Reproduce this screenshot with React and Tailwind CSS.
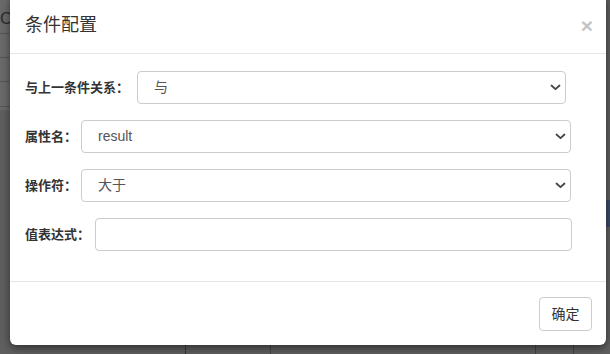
import React from "react";

const cjk = { fontFamily: '"Liberation Sans", "Noto Sans CJK SC", sans-serif' };

const Chevron = () => (
  <svg width="11" height="7" viewBox="0 0 11 7" className="shrink-0">
    <path d="M1.5 1.5 L5.5 5.2 L9.5 1.5" fill="none" stroke="#444" strokeWidth="1.8" strokeLinecap="round" strokeLinejoin="round" />
  </svg>
);

const SelectBox = ({ value, width }) => (
  <div
    className="h-[33px] flex items-center justify-between pl-[16px] pr-[4px] border border-[#ccc] rounded-[4px] bg-white text-[14px] text-[#555]"
    style={{ width }}
  >
    <span>{value}</span>
    <Chevron />
  </div>
);

const Row = ({ label, labelWidth, children }) => (
  <div className="flex items-center">
    <span className="text-[13px] font-bold text-[#333] shrink-0" style={{ width: labelWidth }}>{label}</span>
    {children}
  </div>
);

export default function App() {
  return (
    <div className="relative w-[610px] h-[354px] overflow-hidden bg-[#5f5f5f]" style={cjk}>
      {/* dimmed page behind the dialog */}
      <div className="absolute left-0 top-0 w-[12px] h-[110px] bg-[#6a6a6a]">
        <span className="absolute left-0 top-[10px] text-[17px] text-[#2a2a2a] leading-none">C</span>
        <div className="absolute left-0 top-[33px] w-full border-t border-[#555]" />
        <div className="absolute left-0 top-[57px] w-full border-t border-[#555]" />
        <div className="absolute left-0 top-[81px] w-full border-t border-[#555]" />
        <div className="absolute left-0 top-[106px] w-full border-t border-[#555]" />
      </div>
      <div className="absolute left-[185px] top-[344px] h-[10px] border-l border-dashed border-[#333]" />
      <div className="absolute left-[270px] top-[344px] h-[10px] border-l border-[#444]" />
      <div className="absolute left-[535px] top-[344px] h-[10px] border-l border-[#444]" />
      <div className="absolute left-[573px] top-[344px] h-[10px] border-l border-[#444]" />
      <div className="absolute left-[605px] top-[200px] w-[5px] h-[27px] bg-[#3b4a66]" />

      {/* dialog */}
      <div className="absolute left-[10px] top-[-6px] w-[596px] bg-white rounded-[6px] shadow-[0_3px_9px_rgba(0,0,0,0.5)] flex flex-col">
        <div className="h-[60px] pt-[4px] px-[15px] flex items-center justify-between border-b border-[#e5e5e5]">
          <span className="text-[18px] text-[#333]">条件配置</span>
          <span className="text-[21px] font-bold text-[#c4c4c4] leading-none mr-[-2px]" style={{ fontFamily: '"Liberation Sans", sans-serif' }}>×</span>
        </div>

        <div className="pt-[17px] pb-[30px] px-[15px] flex flex-col gap-[16px]">
          <Row label="与上一条件关系：" labelWidth="112px">
            <SelectBox value="与" width="429px" />
          </Row>
          <Row label="属性名：" labelWidth="56px">
            <SelectBox value="result" width="490px" />
          </Row>
          <Row label="操作符：" labelWidth="56px">
            <SelectBox value="大于" width="490px" />
          </Row>
          <Row label="值表达式：" labelWidth="70px">
            <div className="h-[33px] w-[477px] border border-[#ccc] rounded-[4px] bg-white" />
          </Row>
        </div>

        <div className="border-t border-[#e5e5e5] pt-[15px] pb-[14px] pr-[14px] flex justify-end">
          <button className="h-[34px] w-[53px] border border-[#ccc] rounded-[4px] bg-white text-[14px] text-[#333]">确定</button>
        </div>
      </div>
    </div>
  );
}
